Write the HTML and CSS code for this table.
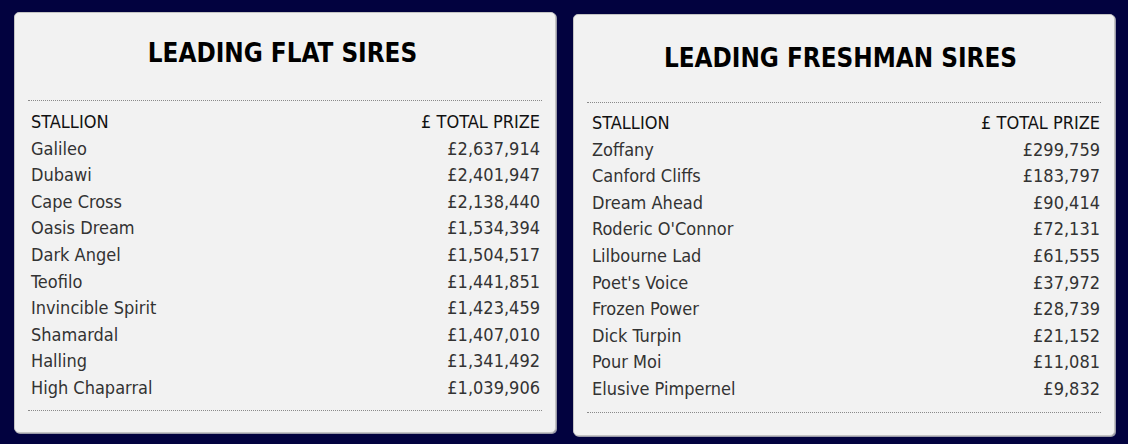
FILE: index.html
```html
<!DOCTYPE html>
<html>
<head>
<meta charset="utf-8">
<link rel="stylesheet" href="styles.css">
</head>
<body>
<div class="wrap">
  <section class="card card-flat">
    <h2 class="title">LEADING FLAT SIRES</h2>
    <div class="table">
      <div class="row head"><span>STALLION</span><span>£ TOTAL PRIZE</span></div>
      <div class="row"><span>Galileo</span><span>£2,637,914</span></div>
      <div class="row"><span>Dubawi</span><span>£2,401,947</span></div>
      <div class="row"><span>Cape Cross</span><span>£2,138,440</span></div>
      <div class="row"><span>Oasis Dream</span><span>£1,534,394</span></div>
      <div class="row"><span>Dark Angel</span><span>£1,504,517</span></div>
      <div class="row"><span>Teofilo</span><span>£1,441,851</span></div>
      <div class="row"><span>Invincible Spirit</span><span>£1,423,459</span></div>
      <div class="row"><span>Shamardal</span><span>£1,407,010</span></div>
      <div class="row"><span>Halling</span><span>£1,341,492</span></div>
      <div class="row"><span>High Chaparral</span><span>£1,039,906</span></div>
    </div>
  </section>
  <section class="card card-fresh">
    <h2 class="title">LEADING FRESHMAN SIRES</h2>
    <div class="table">
      <div class="row head"><span>STALLION</span><span>£ TOTAL PRIZE</span></div>
      <div class="row"><span>Zoffany</span><span>£299,759</span></div>
      <div class="row"><span>Canford Cliffs</span><span>£183,797</span></div>
      <div class="row"><span>Dream Ahead</span><span>£90,414</span></div>
      <div class="row"><span>Roderic O'Connor</span><span>£72,131</span></div>
      <div class="row"><span>Lilbourne Lad</span><span>£61,555</span></div>
      <div class="row"><span>Poet's Voice</span><span>£37,972</span></div>
      <div class="row"><span>Frozen Power</span><span>£28,739</span></div>
      <div class="row"><span>Dick Turpin</span><span>£21,152</span></div>
      <div class="row"><span>Pour Moi</span><span>£11,081</span></div>
      <div class="row"><span>Elusive Pimpernel</span><span>£9,832</span></div>
    </div>
  </section>
</div>
</body>
</html>
```
FILE: styles.css
```css
html, body {
  margin: 0;
  padding: 0;
  background: #02023f;
  height: 100%;
}
.wrap {
  display: flex;
  align-items: flex-start;
  gap: 17px;
  padding: 12px 0 0 14px;
}
.card {
  box-sizing: border-box;
  width: 542px;
  height: 421px;
  background: #f2f2f2;
  border: 1px solid #c4c4c4;
  border-radius: 5px;
  box-shadow: 1px 1px 0 #9a9aa8;
  padding: 0 13px;
  font-family: "DejaVu Sans Condensed", "DejaVu Sans", sans-serif;
  display: flex;
  flex-direction: column;
}
.card-fresh {
  margin-top: 2px;
  height: 422px;
}
.title {
  margin: 0;
  height: 87px;
  box-sizing: border-box;
  padding: 26px 5px 0 0;
  font-size: 25.8px;
  line-height: 28px;
  font-weight: bold;
  color: #000;
  text-align: center;
}
.card-fresh .title {
  padding-top: 29px;
  padding-right: 7px;
}
.table {
  border-top: 1px dotted #8a8a8a;
  border-bottom: 1px dotted #8a8a8a;
  padding: 8px 2px 8px 3px;
}
.card-fresh .table {
  padding: 7px 1px 9px 5px;
}
.row {
  display: flex;
  justify-content: space-between;
  font-size: 18px;
  line-height: 26.6px;
  color: #333;
}
.row.head {
  color: #111;
}
```
